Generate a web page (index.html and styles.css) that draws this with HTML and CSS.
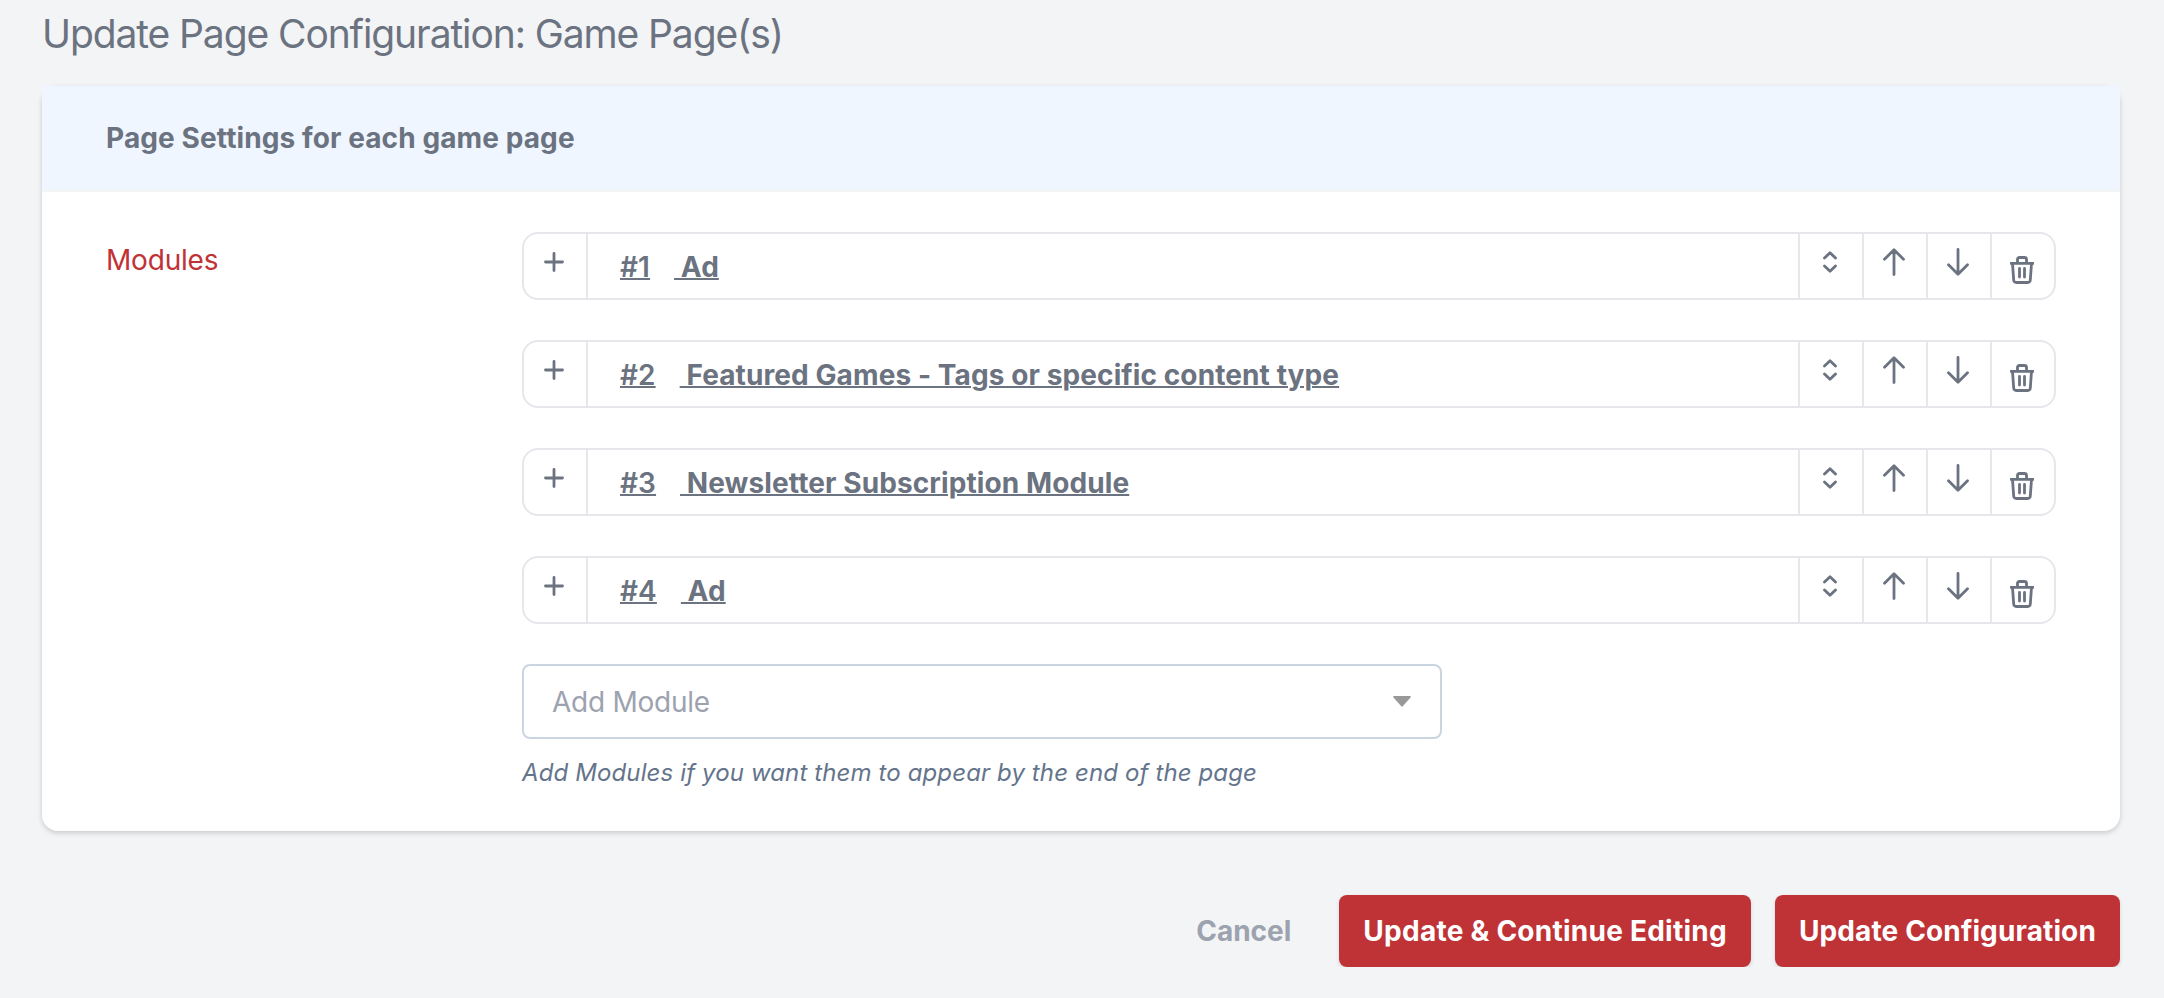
FILE: index.html
```html
<!DOCTYPE html>
<html lang="en">
<head>
<meta charset="utf-8">
<title>Update Page Configuration</title>
<link rel="stylesheet" href="styles.css">
</head>
<body>
<svg width="0" height="0" class="sprite">
  <symbol id="plus" viewBox="0 0 20 20"><path d="M10 1.5v17M1.5 10h17"/></symbol>
  <symbol id="sort" viewBox="0 0 14 22"><path d="M1.5 7 7 1.8 12.500 7M1.500 15 7 20.200 12.500 15"/></symbol>
  <symbol id="up" viewBox="0 0 22 28"><path d="M11 26.500V2M1.500 11.300 11 1.800l9.500 9.500"/></symbol>
  <symbol id="down" viewBox="0 0 22 28"><path d="M11 1.500V26M1.500 16.700 11 26.200l9.500-9.500"/></symbol>
  <symbol id="trash" viewBox="0 0 24 28"><path d="M1 7.300h22M7.500 7V3.500Q7.500 1.500 9.500 1.500h5q2 0 2 2V7M2.500 7.500l1.200 16.500q.2 2.500 2.600 2.500h11.400q2.400 0 2.600-2.500L21.500 7.500M9.500 12.500v8.500M14.500 12.500v8.500"/></symbol>
</svg>
<main class="page">
  <h1 class="title">Update Page Configuration: Game Page(s)</h1>
  <section class="card">
    <header class="card-head">Page Settings for each game page</header>
    <div class="card-body">
      <div class="label">Modules</div>
      <div class="field">
        <div class="row"><button class="cell"><svg class="i-plus"><use href="#plus"/></svg></button><a class="name"><span class="num">#1</span><span> Ad</span></a><button class="cell"><svg class="i-sort"><use href="#sort"/></svg></button><button class="cell"><svg class="i-arrow"><use href="#up"/></svg></button><button class="cell"><svg class="i-arrow"><use href="#down"/></svg></button><button class="cell"><svg class="i-trash"><use href="#trash"/></svg></button></div>
        <div class="row"><button class="cell"><svg class="i-plus"><use href="#plus"/></svg></button><a class="name"><span class="num">#2</span><span> Featured Games - Tags or specific content type</span></a><button class="cell"><svg class="i-sort"><use href="#sort"/></svg></button><button class="cell"><svg class="i-arrow"><use href="#up"/></svg></button><button class="cell"><svg class="i-arrow"><use href="#down"/></svg></button><button class="cell"><svg class="i-trash"><use href="#trash"/></svg></button></div>
        <div class="row"><button class="cell"><svg class="i-plus"><use href="#plus"/></svg></button><a class="name"><span class="num">#3</span><span> Newsletter Subscription Module</span></a><button class="cell"><svg class="i-sort"><use href="#sort"/></svg></button><button class="cell"><svg class="i-arrow"><use href="#up"/></svg></button><button class="cell"><svg class="i-arrow"><use href="#down"/></svg></button><button class="cell"><svg class="i-trash"><use href="#trash"/></svg></button></div>
        <div class="row"><button class="cell"><svg class="i-plus"><use href="#plus"/></svg></button><a class="name"><span class="num">#4</span><span> Ad</span></a><button class="cell"><svg class="i-sort"><use href="#sort"/></svg></button><button class="cell"><svg class="i-arrow"><use href="#up"/></svg></button><button class="cell"><svg class="i-arrow"><use href="#down"/></svg></button><button class="cell"><svg class="i-trash"><use href="#trash"/></svg></button></div>
        <div class="select"><span>Add Module</span><svg class="caret" viewBox="0 0 18 11"><path d="M1 0h16Q18.500 0 17.500 1.500L10 10q-1 1-2 0L.5 1.500Q-.5 0 1 0z"/></svg></div>
        <p class="help">Add Modules if you want them to appear by the end of the page</p>
      </div>
    </div>
  </section>
  <footer class="actions">
    <a class="cancel">Cancel</a>
    <button class="btn btn-continue">Update &amp; Continue Editing</button>
    <button class="btn">Update Configuration</button>
  </footer>
</main>
</body>
</html>
```
FILE: styles.css
```css
* { box-sizing: border-box; }
body { margin: 0; background: #f3f4f6; color: #6b7280; font: 28px/40px Inter, "Liberation Sans", sans-serif; overflow: hidden; }
button { font: inherit; color: inherit; background: none; border: 0; margin: 0; padding: 0; }
.sprite { position: absolute; }
.page { padding: 6px 44px 0 42px; }
.title { margin: 0 0 24px; font-size: 39px; line-height: 56px; font-weight: 400; white-space: nowrap; letter-spacing: -1.100px; }
.card { height: 745px; background: #fff; border-radius: 16px; box-shadow: 0 2px 6px rgba(0,0,0,.1), 0 2px 4px rgba(0,0,0,.08); }
.card-head { height: 106px; padding: 32px 64px 0; background: #eff6ff; border-bottom: 2px solid #f3f4f6; font-weight: 700; letter-spacing: .1px; }
.card-body { display: flex; padding: 40px 64px 0; }
.label { width: 416px; padding-top: 8px; color: #bf3236; letter-spacing: -.2px; }
.field { flex: 1; }
.row { display: flex; height: 68px; margin-bottom: 40px; border: 2px solid #e5e7eb; border-radius: 16px; }
.cell { display: flex; justify-content: center; width: 64px; padding-right: 2px; border-left: 2px solid #e5e7eb; }
.cell:first-child { border-left: 0; width: 62px; }
.name { flex: 1; display: flex; gap: 24px; padding: 13px 32px 0; border-left: 2px solid #e5e7eb; font-weight: 700; letter-spacing: .1px; text-decoration: underline; text-decoration-thickness: 2px; white-space: pre; }
.num { font-weight: 600; }
svg { fill: none; stroke: #6b7280; stroke-width: 2.800; stroke-linecap: round; stroke-linejoin: round; }
.i-plus { width: 20px; height: 20px; margin-top: 18px; }
.i-sort { width: 14px; height: 22px; margin-top: 17px; }
.i-arrow { width: 22px; height: 28px; margin-top: 14px; }
.i-trash { width: 24px; height: 28px; margin-top: 22px; }
.select { display: flex; align-items: center; justify-content: space-between; width: 920px; height: 75px; padding: 0 29px 0 28px; border: 2px solid #cbd5e1; border-radius: 8px; color: #9ca3af; letter-spacing: -.25px; }
.caret { width: 18px; height: 11px; fill: #999; stroke: none; }
.help { margin: 16px 0 0; font-size: 24px; line-height: 36px; font-style: italic; letter-spacing: .120px; color: #64748b; white-space: nowrap; }
.actions { display: flex; justify-content: flex-end; align-items: center; margin-top: 64px; font-weight: 700; }
.cancel { margin-right: 48px; color: #9ca3af; }
.btn { height: 72px; padding: 0 24px; border-radius: 8px; background: #bf3236; color: #fff; font-weight: 700; letter-spacing: .130px; box-shadow: 0 2px 4px rgba(0,0,0,.12); }
.btn-continue { letter-spacing: .250px; }
.btn + .btn { margin-left: 24px; }
```
